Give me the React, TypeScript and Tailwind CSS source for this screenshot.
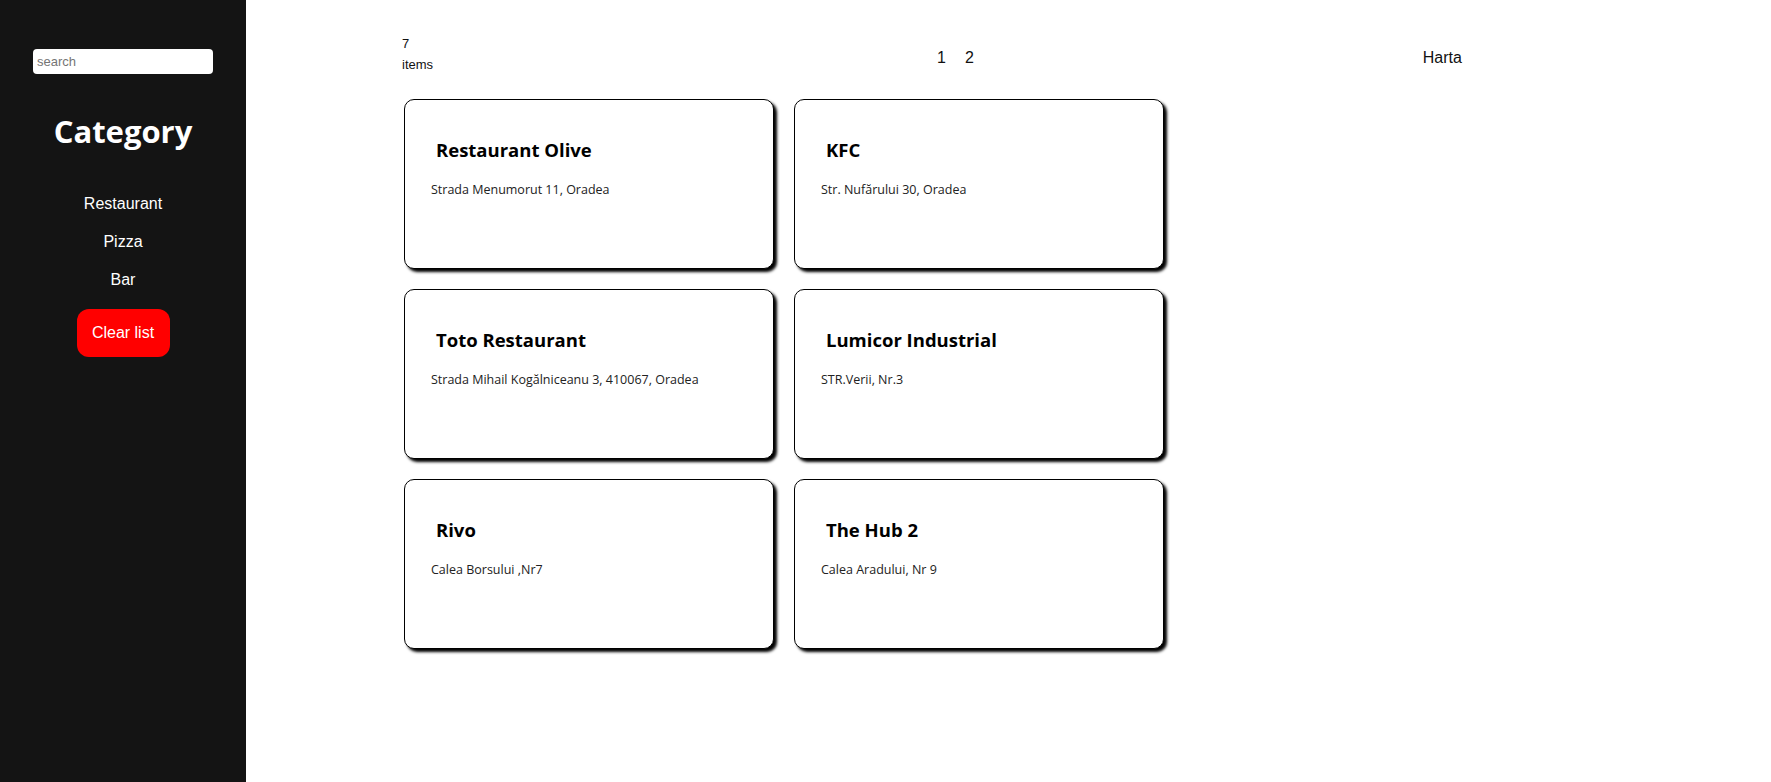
import React from "react";

const cards = [
  { name: "Restaurant Olive", addr: "Strada Menumorut 11, Oradea" },
  { name: "KFC", addr: "Str. Nufărului 30, Oradea" },
  { name: "Toto Restaurant", addr: "Strada Mihail Kogălniceanu 3, 410067, Oradea" },
  { name: "Lumicor Industrial", addr: "STR.Verii, Nr.3" },
  { name: "Rivo", addr: "Calea Borsului ,Nr7" },
  { name: "The Hub 2", addr: "Calea Aradului, Nr 9" },
];

export default function App() {
  return (
    <div className="flex w-full min-h-[782px] bg-white">
      <aside className="w-[246px] shrink-0 bg-[#141414] min-h-[782px] flex flex-col items-center pt-[49px]">
        <input
          placeholder="search"
          className="w-[180px] h-[25px] bg-white rounded-[4px] px-[4px] text-[13px] text-black placeholder:text-[#757575] outline-none font-['Liberation_Sans',Arial,sans-serif]"
        />
        <h1 className="mt-[36px] text-white text-[31px] leading-[43px] font-bold font-['Open_Sans','Noto_Sans',sans-serif]">
          Category
        </h1>
        <ul className="mt-[32px] flex flex-col items-center text-white text-[16px] font-['Liberation_Sans',Arial,sans-serif]">
          <li className="h-[38px] flex items-center">Restaurant</li>
          <li className="h-[38px] flex items-center">Pizza</li>
          <li className="h-[38px] flex items-center">Bar</li>
        </ul>
        <button className="mt-[10px] w-[93px] h-[48px] rounded-[12px] bg-[#ff0000] text-white text-[16px] font-['Liberation_Sans',Arial,sans-serif]">
          Clear list
        </button>
      </aside>
      <main className="flex-1 pl-[156px] pt-[33px]">
        <div className="flex items-center h-[42px] font-['Liberation_Sans',Arial,sans-serif] text-[#111]">
          <div className="w-[40px] text-[13px] leading-[21px]">
            7<br />items
          </div>
          <div className="ml-[495px] mt-[7px] flex gap-[19px] text-[16px]">
            <span>1</span>
            <span>2</span>
          </div>
          <div className="ml-[449px] mt-[7px] text-[16px]">Harta</div>
        </div>
        <div className="mt-[24px] grid grid-cols-[370px_370px] gap-[20px] pl-[2px]">
          {cards.map((c) => (
            <div
              key={c.name}
              className="h-[170px] border border-black rounded-[10px] bg-white shadow-[3px_3px_3px_#000] pl-[26px] pt-[36px] font-['Open_Sans','Noto_Sans',sans-serif] text-black"
            >
              <div className="pl-[5px] text-[18.5px] leading-[27px] font-bold">{c.name}</div>
              <div className="mt-[18px] text-[12.5px] leading-[18px] text-[#222]">{c.addr}</div>
            </div>
          ))}
        </div>
      </main>
    </div>
  );
}
